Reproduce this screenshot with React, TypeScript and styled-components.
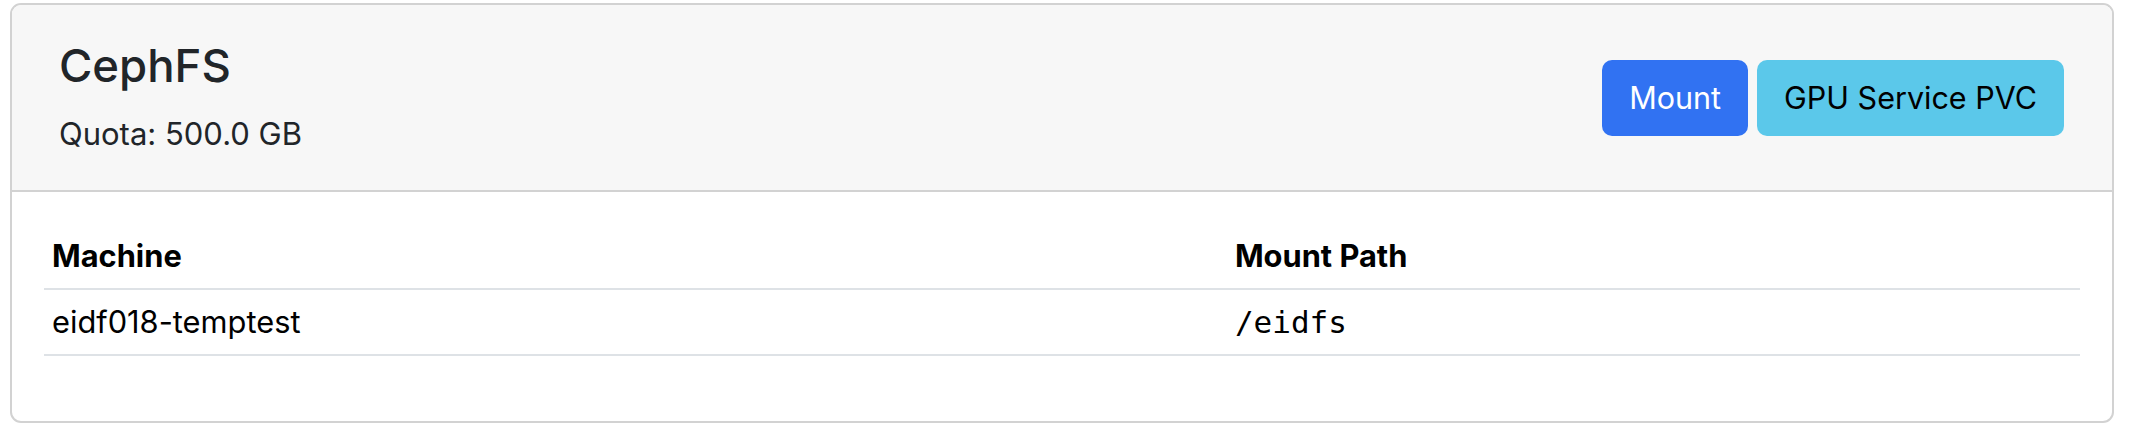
import React from 'react';
import styled, { createGlobalStyle } from 'styled-components';

const GlobalStyle = createGlobalStyle`
  body {
    margin: 0;
    background: #ffffff;
    font-family: Inter, "Noto Sans", "Liberation Sans", sans-serif;
    color: #212529;
  }
`;

const Card = styled.div`
  margin: 3px 26px 0 10px;
  border: 2px solid #d2d2d2;
  border-radius: 11px;
  overflow: hidden;
  background: #ffffff;
`;

const CardHeader = styled.div`
  display: flex;
  align-items: center;
  justify-content: space-between;
  padding: 34px 48px 33px 47px;
  background: #f7f7f7;
  border-bottom: 2px solid #d2d2d2;
`;

const TitleBlock = styled.div`
  display: flex;
  flex-direction: column;
`;

const Title = styled.h3`
  margin: 0 0 17px;
  font-size: 45.5px;
  font-weight: 500;
  line-height: 1.2;
  color: #212529;
`;

const Quota = styled.p`
  margin: 0;
  font-size: 31px;
  line-height: 1.5;
  color: #212529;
`;

const Actions = styled.div`
  display: flex;
  gap: 9px;
`;

const Button = styled.button<{ variant: 'primary' | 'info' }>`
  height: 76px;
  padding: 0 27px;
  border: none;
  border-radius: 10px;
  font-family: inherit;
  font-size: 30.5px;
  line-height: 1.5;
  cursor: pointer;
  background: ${({ variant }) => (variant === 'primary' ? '#3172f2' : '#5bc8ea')};
  color: ${({ variant }) => (variant === 'primary' ? '#ffffff' : '#000000')};
`;

const CardBody = styled.div`
  padding: 32px;
`;

const Table = styled.table`
  width: 100%;
  margin-bottom: 33px;
  border-collapse: collapse;
  font-size: 30.8px;
  line-height: 1.5;
  color: #000000;
`;

const Th = styled.th<{ width?: string }>`
  width: ${({ width }) => width || 'auto'};
  padding: 9px 8px;
  text-align: left;
  font-weight: 700;
  border-bottom: 2px solid #dee2e6;
`;

const Td = styled.td`
  padding: 9px 8px;
  border-bottom: 2px solid #dee2e6;
`;

const Code = styled.span`
  font-family: "DejaVu Sans Mono", "Liberation Mono", monospace;
  font-size: 31px;
  line-height: 1;
`;

interface MountRow {
  machine: string;
  path: string;
}

const rows: MountRow[] = [{ machine: 'eidf018-temptest', path: '/eidfs' }];

const App: React.FC = () => (
  <>
    <GlobalStyle />
    <Card>
      <CardHeader>
        <TitleBlock>
          <Title>CephFS</Title>
          <Quota>Quota: 500.0 GB</Quota>
        </TitleBlock>
        <Actions>
          <Button variant="primary">Mount</Button>
          <Button variant="info">GPU Service PVC</Button>
        </Actions>
      </CardHeader>
      <CardBody>
        <Table>
          <thead>
            <tr>
              <Th width="58.1%">Machine</Th>
              <Th>Mount Path</Th>
            </tr>
          </thead>
          <tbody>
            {rows.map((r) => (
              <tr key={r.machine}>
                <Td>{r.machine}</Td>
                <Td>
                  <Code>{r.path}</Code>
                </Td>
              </tr>
            ))}
          </tbody>
        </Table>
      </CardBody>
    </Card>
  </>
);

export default App;
